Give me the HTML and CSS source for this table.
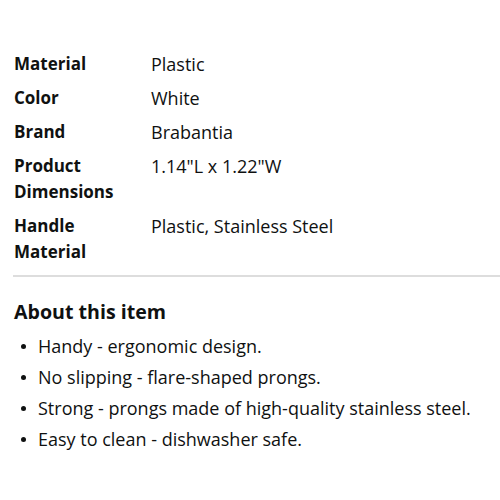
FILE: index.html
```html
<!DOCTYPE html>
<html>
<head>
<meta charset="utf-8">
<link rel="stylesheet" href="styles.css">
</head>
<body>
<div class="page">
  <dl class="specs">
    <dt>Material</dt><dd>Plastic</dd>
    <dt>Color</dt><dd>White</dd>
    <dt>Brand</dt><dd>Brabantia</dd>
    <dt>Product<br>Dimensions</dt><dd>1.14"L x 1.22"W</dd>
    <dt>Handle<br>Material</dt><dd>Plastic, Stainless Steel</dd>
  </dl>
  <hr class="divider">
  <h2 class="about">About this item</h2>
  <ul class="bullets">
    <li>Handy - ergonomic design.</li>
    <li>No slipping - flare-shaped prongs.</li>
    <li>Strong - prongs made of high-quality stainless steel.</li>
    <li>Easy to clean - dishwasher safe.</li>
  </ul>
</div>
</body>
</html>
```
FILE: styles.css
```css
html, body {
  margin: 0;
  padding: 0;
  background: #ffffff;
}
body {
  font-family: "Open Sans", "Noto Sans", sans-serif;
  color: #0f1111;
  width: 500px;
  height: 500px;
  overflow: hidden;
}
.page {
  padding-top: 51px;
}
.specs {
  display: grid;
  grid-template-columns: 137px 1fr;
  row-gap: 8px;
  margin: 0 0 0 14px;
  line-height: 26px;
}
.specs dt {
  font-size: 17px;
  font-weight: 700;
  margin: 0;
}
.specs dd {
  font-size: 18px;
  margin: 0;
}
.divider {
  border: 0;
  height: 2px;
  background: #dddddd;
  margin: 10px 0 0 13px;
}
.about {
  font-size: 19.6px;
  font-weight: 700;
  margin: 20px 0 0 14px;
  line-height: 30px;
}
.bullets {
  list-style: none;
  margin: 6px 0 0 0;
  padding: 0 0 0 21px;
  font-size: 18px;
  line-height: 26px;
}
.bullets li {
  position: relative;
  padding-left: 17px;
  margin-bottom: 5px;
}
.bullets li::before {
  content: "";
  position: absolute;
  left: 0;
  top: 11px;
  width: 5px;
  height: 5px;
  border-radius: 50%;
  background: #0f1111;
}
```
